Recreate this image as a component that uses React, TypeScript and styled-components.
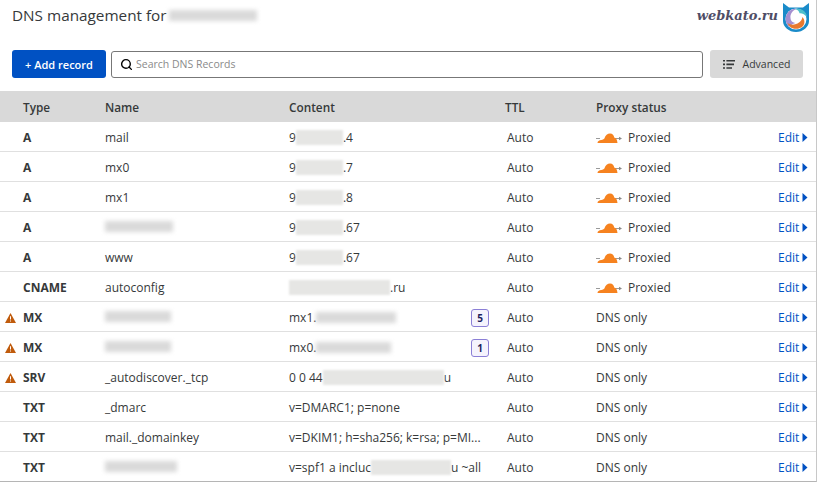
import styled, { createGlobalStyle } from 'styled-components';
import { Search } from 'lucide-react';

const GlobalStyle = createGlobalStyle`
  html, body {
    margin: 0;
    padding: 0;
    background: #fff;
  }
  body {
    font-family: "Open Sans", "Noto Sans", "Liberation Sans", sans-serif;
    color: #36393a;
  }
`;

type DnsRow = {
  type: string;
  warn?: boolean;
  name?: string;
  blurName?: number;
  head: string;
  hardBlur?: number;
  softBlur?: number;
  tail?: string;
  badge?: number;
  proxied: boolean;
};

const rows: DnsRow[] = [
  { type: 'A', name: 'mail', head: '9', hardBlur: 47, tail: '.4', proxied: true },
  { type: 'A', name: 'mx0', head: '9', hardBlur: 47, tail: '.7', proxied: true },
  { type: 'A', name: 'mx1', head: '9', hardBlur: 47, tail: '.8', proxied: true },
  { type: 'A', blurName: 68, head: '9', hardBlur: 47, tail: '.67', proxied: true },
  { type: 'A', name: 'www', head: '9', hardBlur: 47, tail: '.67', proxied: true },
  { type: 'CNAME', name: 'autoconfig', head: '', hardBlur: 101, tail: '.ru', proxied: true },
  { type: 'MX', warn: true, blurName: 66, head: 'mx1.', softBlur: 80, badge: 5, proxied: false },
  { type: 'MX', warn: true, blurName: 66, head: 'mx0.', softBlur: 75, badge: 1, proxied: false },
  { type: 'SRV', warn: true, name: '_autodiscover._tcp', head: '0 0 44', hardBlur: 121, tail: 'u', proxied: false },
  { type: 'TXT', name: '_dmarc', head: 'v=DMARC1; p=none', proxied: false },
  { type: 'TXT', name: 'mail._domainkey', head: 'v=DKIM1; h=sha256; k=rsa; p=MI...', proxied: false },
  { type: 'TXT', blurName: 72, head: 'v=spf1 a incluc', hardBlur: 80, tail: 'u ~all', proxied: false },
];

const Page = styled.div`
  width: 817px;
  height: 482px;
  background: #fff;
  border-right: 1px solid #c8c8c8;
  border-bottom: 1px solid #b5b5b5;
  overflow: hidden;
  box-sizing: border-box;
`;

const TitleBar = styled.div`
  display: flex;
  justify-content: space-between;
  align-items: flex-start;
  height: 50px;
  padding: 3px 7px 0 12px;
  box-sizing: border-box;
`;

const Title = styled.h1`
  display: flex;
  align-items: center;
  gap: 2px;
  margin: 1px 0 0;
  font-size: 15.3px;
  font-weight: 400;
  line-height: 22px;
  color: #36393a;
`;

const Brand = styled.div`
  display: flex;
  align-items: flex-start;
  gap: 5px;
`;

const BrandText = styled.span`
  font-family: "DejaVu Serif", serif;
  font-style: italic;
  font-size: 13px;
  font-weight: 700;
  line-height: 26px;
  color: #4f4d66;
`;

const Toolbar = styled.div`
  display: flex;
  align-items: center;
  height: 28px;
  padding: 0 13px 0 12px;
  gap: 5px;
`;

const AddButton = styled.button`
  width: 94px;
  height: 28px;
  padding: 0;
  border: none;
  border-radius: 3px;
  background: #0051c3;
  color: #fff;
  font: 600 11px "Open Sans", sans-serif;
`;

const SearchBox = styled.div`
  flex: 1;
  display: flex;
  align-items: center;
  gap: 3px;
  height: 27px;
  padding: 0 8px;
  box-sizing: border-box;
  border: 1px solid #777;
  border-radius: 3px;
  color: #000;
`;

const Placeholder = styled.span`
  font-size: 10.5px;
  color: #8a8a8a;
`;

const AdvancedButton = styled.button`
  display: flex;
  align-items: center;
  justify-content: center;
  gap: 8px;
  width: 93px;
  height: 28px;
  margin-left: 2px;
  padding: 0;
  border: none;
  border-radius: 3px;
  background: #d9d9d9;
  color: #36393a;
  font: 400 10.5px "Open Sans", sans-serif;
`;

const gridColumns = 'grid-template-columns: 105px 184px 216px 91px 1fr 38px;';

const HeaderRow = styled.div`
  display: grid;
  ${gridColumns}
  align-items: center;
  height: 31px;
  margin-top: 13px;
  background: #d9d9d9;
  font-size: 11.8px;
  font-weight: 600;
  color: #36393a;
`;

const HeaderCell = styled.div<{ $first?: boolean }>`
  padding-left: ${(p) => (p.$first ? '23px' : '0')};
`;

const Row = styled.div`
  display: grid;
  ${gridColumns}
  align-items: center;
  height: 30px;
  padding-top: 2px;
  box-sizing: border-box;
  border-bottom: 1px solid #e0e0e0;
  font-size: 12px;
  color: #36393a;
  &:last-child {
    border-bottom-color: transparent;
  }
`;

const TypeCell = styled.div`
  display: flex;
  align-items: center;
  padding-left: 5px;
  font-weight: 700;
`;

const WarnSlot = styled.span`
  display: inline-flex;
  width: 18px;
  flex: none;
`;

const ContentCell = styled.div`
  display: flex;
  align-items: center;
  white-space: pre;
  padding-right: 16px;
`;

const HardBlur = styled.span<{ $w: number }>`
  display: inline-block;
  flex: none;
  width: ${(p) => p.$w}px;
  height: 15px;
  background: #e6e6e4;
  filter: blur(0.8px);
`;

const SoftBlur = styled.span<{ $w: number }>`
  display: inline-block;
  flex: none;
  width: ${(p) => p.$w}px;
  height: 11px;
  background: #dadada;
  filter: blur(2.2px);
`;

const Badge = styled.span`
  margin-left: auto;
  display: inline-flex;
  align-items: center;
  justify-content: center;
  width: 18px;
  height: 18px;
  box-sizing: border-box;
  border: 1px solid #8b7fd6;
  border-radius: 3px;
  background: #f5f3fd;
  color: #1d1f5e;
  font-size: 10px;
  font-weight: 700;
`;

const TtlCell = styled.div`
  padding-left: 2px;
`;

const ProxyCell = styled.div`
  display: flex;
  align-items: center;
  gap: 6px;
`;

const EditLink = styled.a`
  display: flex;
  align-items: center;
  gap: 3px;
  color: #0051c3;
`;

const Cloud = () => (
  <svg width="26" height="10" viewBox="0 0 26 10">
    <path d="M0 5.500h4M19 5.500h5" stroke="#9a9a9a" strokeWidth="1" fill="none" />
    <path d="M26 5.500l-3-1.800v3.600z" fill="#8a8a8a" />
    <path d="M1.500 10C1.500 8.400 3 7 5.500 7 6.600 6.800 7.600 6.200 8.400 5.400 9.400 2 11.500.5 14 .5c2.600 0 4 2 4.200 4 1.800.1 3 2.200 3.300 5.500z" fill="#f6821f" />
  </svg>
);

const WarnIcon = () => (
  <svg width="11" height="10" viewBox="0 0 11 10">
    <path d="M5.500 0L11 10H0z" fill="#c05b0c" />
    <path d="M5 3.200h1v3.400H5zM5 7.400h1v1.100H5z" fill="#fff" />
  </svg>
);

const ListIcon = () => (
  <svg width="12" height="9" viewBox="0 0 12 9" fill="#36393a">
    <path d="M0 0h2v1.600H0zM3.400 0H12v1.600H3.400zM0 3.600h2v1.600H0zM3.400 3.600H11v1.600H3.400zM0 7.200h2v1.600H0zM3.400 7.200H9v1.600H3.400z" />
  </svg>
);

const Caret = () => (
  <svg width="6" height="9" viewBox="0 0 6 9">
    <path d="M0.500 0L5.500 4.500L0.500 9z" fill="#0051c3" />
  </svg>
);

const Logo = () => (
  <svg width="26" height="29" viewBox="0 0 26 29">
    <path d="M0 0l6 4.500h14L26 0v18c0 6-6 11-13 11S0 24 0 18z" fill="#1a8bc9" />
    <circle cx="13" cy="16" r="10.500" fill="#fff" />
    <path d="M6 24C2 20 1.600 14 4.500 10 7 6.800 10.500 5.500 14 5.800 9.500 7.500 7 11 7.500 15c.3 3.500 2.500 4.500 5 5-3 1-5 2-6.500 4z" fill="#a58fd0" />
    <path d="M4.500 20c3 2.200 7 2 10 .5 3.500-1.800 4.500-4 5-6.500 2.500 3 2.500 6.500.5 9-2.800 3.200-9.500 4-13 .8-1-1-2-2.300-2.500-3.800z" fill="#e8792f" />
    <path d="M12 6c4.500-1.200 9 .6 11 4.500.6 1.300.8 2.500.7 3.500-1.700-2.500-4.200-4-7.200-3.800-.3-2-2-3.500-4.500-4.200z" fill="#4fc0cc" />
  </svg>
);

export default function App() {
  return (
    <>
      <GlobalStyle />
      <Page>
        <TitleBar>
          <Title>
            DNS management for <SoftBlur $w={88} />
          </Title>
          <Brand>
            <BrandText>webkato.ru</BrandText>
            <Logo />
          </Brand>
        </TitleBar>
        <Toolbar>
          <AddButton>+ Add record</AddButton>
          <SearchBox>
            <Search size={13} strokeWidth={2.6} />
            <Placeholder>Search DNS Records</Placeholder>
          </SearchBox>
          <AdvancedButton>
            <ListIcon />
            Advanced
          </AdvancedButton>
        </Toolbar>
        <HeaderRow>
          <HeaderCell $first>Type</HeaderCell>
          <HeaderCell>Name</HeaderCell>
          <HeaderCell>Content</HeaderCell>
          <HeaderCell>TTL</HeaderCell>
          <HeaderCell>Proxy status</HeaderCell>
          <HeaderCell />
        </HeaderRow>
        {rows.map((row, i) => (
          <Row key={i}>
            <TypeCell>
              <WarnSlot>{row.warn && <WarnIcon />}</WarnSlot>
              {row.type}
            </TypeCell>
            <div>{row.blurName ? <SoftBlur $w={row.blurName} /> : row.name}</div>
            <ContentCell>
              {row.head}
              {row.hardBlur && <HardBlur $w={row.hardBlur} />}
              {row.softBlur && <SoftBlur $w={row.softBlur} />}
              {row.tail}
              {row.badge && <Badge>{row.badge}</Badge>}
            </ContentCell>
            <TtlCell>Auto</TtlCell>
            <ProxyCell>
              {row.proxied ? (
                <>
                  <Cloud />
                  Proxied
                </>
              ) : (
                'DNS only'
              )}
            </ProxyCell>
            <EditLink>
              Edit <Caret />
            </EditLink>
          </Row>
        ))}
      </Page>
    </>
  );
}
